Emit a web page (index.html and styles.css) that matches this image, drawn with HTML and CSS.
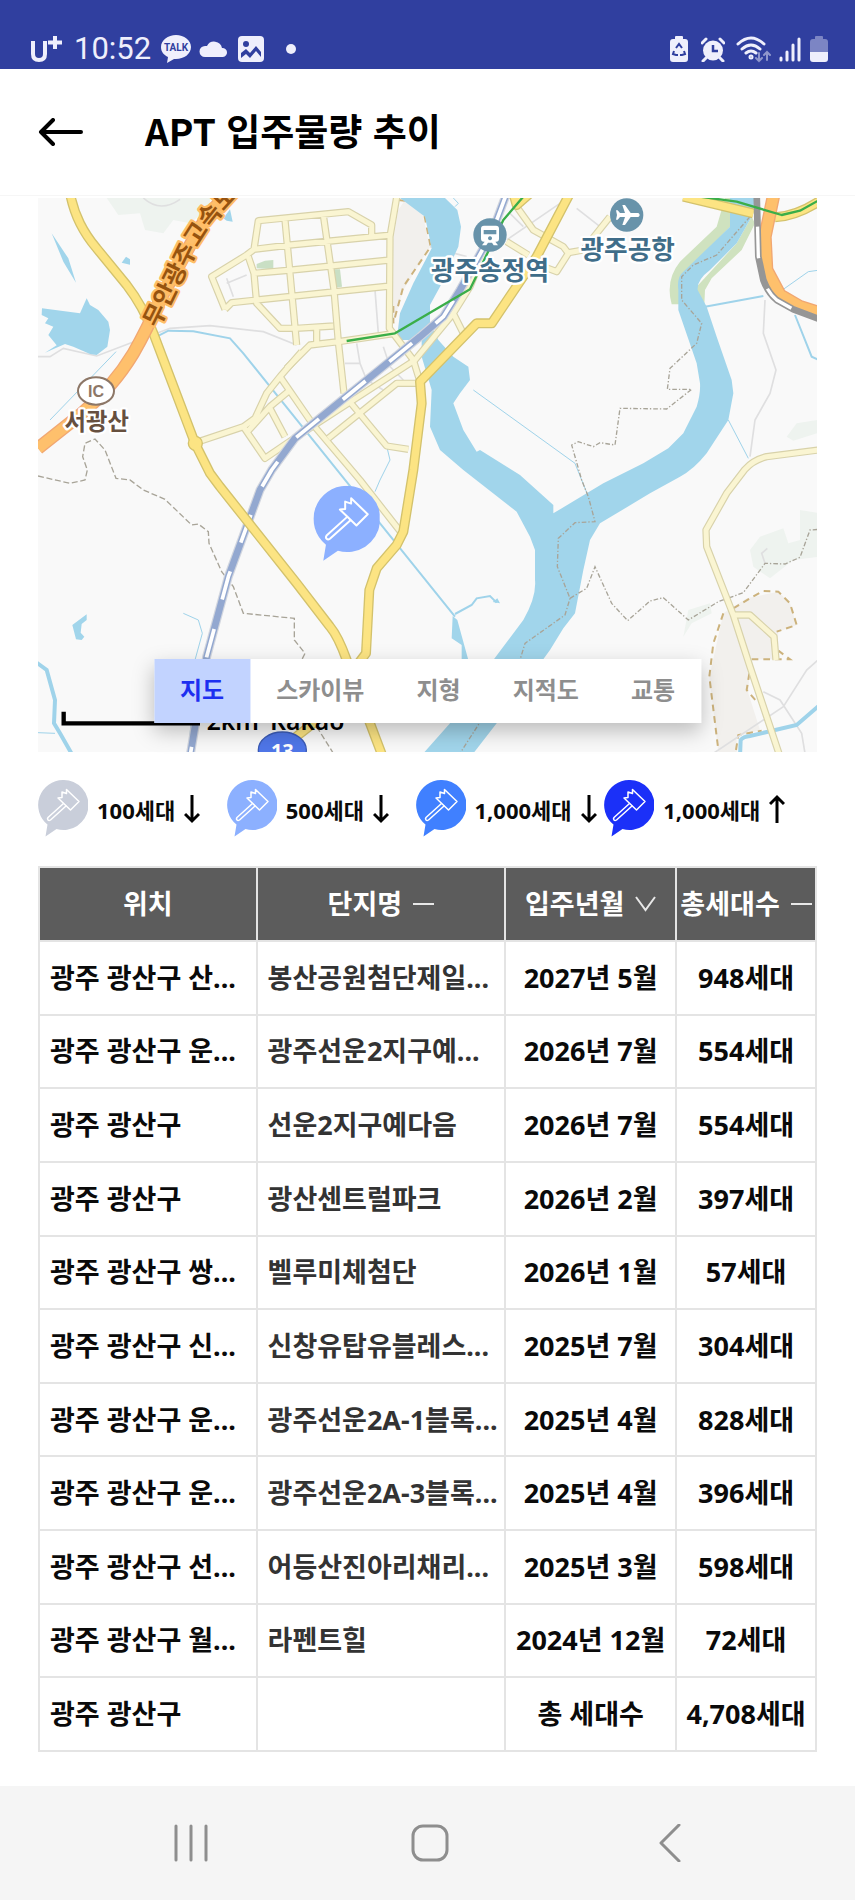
FILE: index.html
```html
<!DOCTYPE html>
<html lang="ko">
<head>
<meta charset="utf-8">
<meta name="viewport" content="width=device-width, initial-scale=1">
<title>APT 입주물량 추이</title>
<link rel="stylesheet" href="styles.css">
</head>
<body>
<svg class="defs" aria-hidden="true">
  <symbol id="pin" viewBox="0 0 100 114">
    <path fill="currentColor" d="M50 0a50 50 0 1 1-13 98L15 113l4-24A50 50 0 0 1 50 0z"/>
    <g fill="none" stroke="#fff" stroke-width="3" stroke-linejoin="round" stroke-linecap="round">
      <path d="M57 19l25 24-17 17-25-24 8-1 0-11 9 3z"/>
      <path d="M51 47L20 75q-2 3 0 5t5 0l31-28"/>
    </g>
  </symbol>
</svg>

<div class="status">
  <div class="status-group">
    <svg width="33" height="28" viewBox="0 0 33 28" fill="none" stroke="currentColor" aria-label="U+"><path d="M3 6v13q0 6 6 6t6-6V6" stroke-width="4"/><path d="M25 1v13M18 7.500h14" stroke-width="4"/></svg>
    <time class="clock">10:52</time>
    <svg class="talk" width="30" height="28" viewBox="0 0 30 28"><path fill="currentColor" d="M15 0c8 0 15 5 15 12s-7 12-15 12h-2l-7 4 1-6C3 20 0 17 0 12 0 5 7 0 15 0z"/><text x="15" y="16" text-anchor="middle" class="talk-label">TALK</text></svg>
    <svg class="cloud" width="29" height="18" viewBox="0 0 29 18"><path fill="currentColor" d="M6 17a5.500 5.500 0 0 1 0-11h2a8 8 0 0 1 15 2 4.500 4.500 0 0 1 1 9z"/></svg>
    <svg class="photo" width="26" height="26" viewBox="0 0 26 26"><rect width="26" height="26" rx="4" fill="currentColor"/><g fill="#303f9f"><circle cx="8" cy="8" r="3"/><path d="M3 17l5-4 4 4 6-7 5 6v5l-5-6-6 7-4-4-5 4z"/></g></svg>
    <span class="dot"></span>
  </div>
  <div class="status-group">
    <svg width="18" height="26" viewBox="0 0 18 26"><path fill="currentColor" d="M5 3V1q0-1 1-1h6q1 0 1 1v2h2q3 0 3 3v17q0 3-3 3H3q-3 0-3-3V6q0-3 3-3z"/><g fill="none" stroke="#303f9f" stroke-width="2"><path d="M6 12l3-4 3 4M4 15l-1 3 3 1h2M14 15l1 3-3 1h-2"/></g></svg>
    <svg class="alarm" width="24" height="25" viewBox="0 0 24 25"><circle cx="12" cy="13.500" r="10" fill="currentColor"/><path d="M1 6l4-4M23 6l-4-4M5 21l-3 3M19 21l3 3" stroke="currentColor" stroke-width="3" stroke-linecap="round"/><path d="M12 8v6h5" fill="none" stroke="#303f9f" stroke-width="2.500"/></svg>
    <svg class="wifi" width="36" height="27" viewBox="0 0 36 27" fill="none" stroke="currentColor" stroke-width="3" stroke-linecap="round"><path d="M2 8q13-12 26 0M6 13q9-8 18 0M10 17q5-4 10 0"/><circle cx="15" cy="21" r="1" /><path opacity=".5" stroke-width="2" d="M23 17v8m-3-3l3 3 3-3M31 24v-8m-3 3l3-3 3 3"/></svg>
    <svg class="signal" width="22" height="25" viewBox="0 0 22 25" stroke="currentColor" stroke-width="3" stroke-linecap="round"><path d="M2 21v2M8 15v8M14 8v15M20 2v21"/></svg>
    <svg class="battery" width="18" height="26" viewBox="0 0 18 26" fill="currentColor"><path opacity=".4" d="M5 3V1q0-1 1-1h6q1 0 1 1v2h2q3 0 3 3v10H0V6q0-3 3-3z"/><path d="M0 16h18v7q0 3-3 3H3q-3 0-3-3z"/></svg>
  </div>
</div>

<header class="topbar">
  <button class="back" type="button" aria-label="뒤로">
    <svg width="45" height="28" viewBox="0 0 45 28" fill="none" stroke="#000" stroke-width="4" stroke-linecap="round" stroke-linejoin="round"><path d="M43 14H3M15 2L3 14l12 12"/></svg>
  </button>
  <h1>APT 입주물량 추이</h1>
</header>

<main>
  <section class="map" aria-label="지도">
    <svg class="map-art" viewBox="24 24 2337 1662">
      <defs>
        <path id="highway" d="M24 775L150 675Q250 590 310 490Q350 420 395 320L500 130Q545 50 610 0"/>
        <path id="highway-label" d="M384 416L505 170Q548 92 650 -10"/>
        <path id="main-road" d="M120 10Q130 60 150 100T200 175L290 285Q340 350 370 430L495 760 540 850 570 890 800 1180 900 1310Q925 1340 950 1410L1020 1600 1058 1700"/>
        <path id="east-road" d="M1625 0L1520 200 1385 400H1340L1170 575 1175 640 1150 840 1120 1025 1100 1065 1040 1135 1018 1200 1008 1390 850 1600 760 1670"/>
        <path id="rail" d="M1430 10L1385 130 1290 300 1240 380 1170 440 795 745 725 840 690 900 595 1160 530 1400 480 1700"/>
        <path id="orange" d="M2232 10L2205 140 2210 240 2250 315 2310 350 2380 372"/>
        <path id="grey-rail" d="M2180 10L2185 200 2200 270Q2215 310 2240 330L2290 358 2380 392"/>
        <g id="streets">
          <path d="M585 358L545 260 650 195 672 178 685 92 955 65 1025 105V135M765 90L800 465M672 178L780 165 1085 135M655 200L672 250 680 340 750 415H800L910 408M672 250L785 240 1080 210M585 358L605 338 680 330 1080 288M880 75L912 300 925 455 942 610M1102 10L1080 140 1078 415 1150 510 1170 575M770 535L840 465 925 455 1095 430M860 410V460"/>
          <path d="M815 485L750 560 710 610 675 685 640 710 500 757M640 710L705 805 800 740 1155 510 1270 370 1320 290 1360 190M750 560L850 705 990 870 1115 1030M650 728L720 650 780 600M720 655L765 740M895 745L1100 580H1165M955 630L1070 768 1135 778M1270 370L1300 430"/>
          <path d="M1460 50L1510 120 1600 170 1615 190 1580 245 1540 230M1430 155L1495 195M1615 188L1660 180 1740 80"/>
          <path d="M2380 778L2210 800Q2170 810 2145 838L2090 910 2028 1020 2030 1070 2110 1275 2160 1430 2250 1700M2110 1275H2160L2232 1340 2238 1410"/>
        </g>
      </defs>

      <rect class="land" x="24" y="24" width="2337" height="1662"/>
      <path class="hill" d="M230 24L265 75 330 70 345 120 400 130 430 90 480 100 540 50V24zM2160 1080L2190 1040 2260 1015 2275 1060 2310 1050 2310 960 2370 970V1100L2290 1110 2220 1165 2170 1130zM2270 740L2300 700 2361 690V730L2290 752zM1960 1340L1975 1260 2040 1240 2045 1270 1985 1300z"/>
      <path class="bank" d="M2085 24L2060 110 1950 215Q1905 270 1925 343H1950L1955 260 2100 110V24zM2165 80L2175 100 2135 180 2045 265 2025 300 2023 345H2000V290L2120 160z"/>
      <path class="park" d="M680 235V222L705 212 730 210V238zM908 238H930L936 290 912 293z"/>
      <path class="zone" d="M1105 60L1125 30 1170 40 1200 170 1120 300 1090 400 1090 150z"/>
      <path class="zone" d="M2080 1270L2150 1225 2245 1205 2280 1240 2300 1305 2245 1325 2240 1408 2160 1408 2155 1510 2190 1620 2120 1640V1686H2065L2038 1460z"/>
      <path class="zone-edge" d="M1105 30L1165 38 1182 70 1202 170 1120 290 1090 400V340M2080 1270L2050 1360 2038 1460 2065 1680M2110 1255L2160 1225 2200 1203 2245 1205 2280 1240 2300 1305 2240 1325M2165 1408H2280L2245 1382M2158 1450L2150 1500 2180 1535M2118 1680L2125 1635 2195 1622"/>

      <g class="lane">
        <path d="M24 500H60L100 475 200 498 300 460 420 415 540 407 700 425 800 465"/>
        <path d="M1035 300L1045 430M945 520H990L1010 570 1060 600M980 460L990 520M1060 470L1080 530 1120 570M590 265L610 320M590 280L650 255"/>
        <path d="M1440 70L1480 110M1430 150L1590 40M1640 55L1710 110M1200 170L1310 200M340 24Q390 70 450 28"/>
        <path d="M2205 330L2200 430 2238 540 2220 610 2175 690 2160 800M2050 1690L2260 1550 2330 1440 2370 1405M2200 1505L2250 1530 2315 1630 2325 1690M2205 1120L2195 1090 2212 1075"/>
      </g>

      <g class="stream">
        <path d="M380 440L415 422 490 424 600 445 640 490 1275 1280"/>
        <path class="thin" d="M258 485L60 690M460 1270L505 1290 517 1330 495 1410 480 1640M24 1628L75 1630M1070 768L1080 810 1050 870 1035 905M1330 600L1635 820 1675 920M2095 690L2155 805M2250 305L2335 245 2370 240M2280 24V10M1270 24L1285 40 1275 50"/>
        <path d="M2025 350L2200 318M2295 375L2345 500 2370 512M1275 1272L1325 1245 1340 1225 1380 1218 1400 1238"/>
        <path class="wide" d="M20 1418L50 1440 75 1530 72 1600 90 1630 130 1700M2130 1700L2132 1650Q2140 1640 2160 1638L2300 1605 2375 1540"/>
      </g>
      <path class="water" d="M36 355L150 370 170 325 180 345 205 360 235 395 240 420 232 470 200 495 180 492 130 470 105 462 45 488 80 466 55 435 70 410 45 400 55 385 35 375zM65 130L115 205 138 278 100 215zM275 218L288 200 300 208V224zM580 85L600 58 608 95 590 92zM170 1273V1290L155 1302 152 1328 163 1340 155 1350 138 1348 127 1305zM1268 1278L1282 1290 1315 1410H1295V1365L1265 1345zM1388 1236L1402 1225 1410 1240z"/>
      <path class="water" d="M1110 24H1245L1282 60 1293 110 1285 170 1230 290 1200 345V400L1225 450 1270 500 1315 530 1320 570 1290 610 1270 640 1300 720 1340 785 1350 780 1470 855 1570 945V970L1720 880 1840 820 1915 775 1960 730 2000 650Q2012 610 2010 580L2000 520 1945 360V300Q1940 260 1960 245L2100 110V24H2175L2165 80 2120 160 2040 240Q2000 270 2003 300L2030 350 2060 440 2105 570 2110 610 2095 690 2030 790Q1990 840 1950 860L1860 910 1710 1000 1680 1050 1660 1140 1635 1270 1600 1315 1560 1380 1400 1600 1330 1690H1180L1260 1600 1390 1410 1480 1290Q1520 1220 1515 1170V1080L1500 1040 1460 965 1300 840 1230 780 1200 710 1205 600 1175 500V450H1100L1110 370 1150 280 1205 175 1185 80z"/>

      <g class="border">
        <path d="M24 858L120 880 165 870 172 840 158 800 165 760 195 747 225 780 258 865 300 870 340 900 405 928 485 1005 505 1002 535 1025 537 1060 575 1145 610 1190 640 1270 793 1285V1350L825 1390 815 1410M860 1610L910 1690"/>
        <path class="fine" d="M2160 80L2060 195 1990 225 1955 260V330L2015 400 2000 460 1920 535 1912 598H1985L1910 657 1770 655 1755 765 1710 758 1690 770 1645 755 1625 765 1655 870 1675 920 1695 995 1635 998 1585 1045 1582 1130 1620 1225 1605 1275 1485 1360 1470 1410 1290 1690M1620 1225L1670 1195 1695 1130 1745 1240 1793 1292 1860 1233 1900 1223 1975 1290 2065 1235 2140 1208 2205 1120 2265 1122 2310 1102 2340 1020 2370 1018"/>
      </g>

      <use href="#streets" class="street-case"/>
      <use href="#streets" class="street"/>
      <use href="#rail" class="rail-case"/>
      <use href="#rail" class="rail"/>
      <use href="#rail" class="rail-dash"/>
      <g class="road-case"><use href="#main-road"/><use href="#east-road"/><circle cx="496" cy="760" r="8"/><path d="M1450 10L1460 45 1500 10M1960 20L2170 70M2235 82Q2300 78 2370 32"/></g>
      <g class="road"><use href="#main-road"/><use href="#east-road"/><circle cx="496" cy="760" r="8"/><path d="M1450 10L1460 45 1500 10M1960 20L2170 70M2235 82Q2300 78 2370 32"/></g>
      <g class="highway-case"><use href="#highway"/><use href="#orange"/></g>
      <g class="highway"><use href="#highway"/><use href="#orange"/></g>
      <use href="#grey-rail" class="grey-rail"/>
      <use href="#grey-rail" class="grey-rail-dash"/>
      <path class="subway" d="M950 453L1095 430 1320 298 1360 215 1420 90 1480 20M2010 20L2120 35 2255 75 2310 62 2375 26"/>

      <text class="road-name"><textPath href="#highway-label">무안광주고속도</textPath></text>
      <ellipse class="ic" cx="198" cy="603" rx="54" ry="41"/>
      <text class="ic-label" x="198" y="621">IC</text>
      <text class="place" x="200" y="720">서광산</text>

      <circle class="poi" cx="1380" cy="135" r="50"/>
      <path fill="#fff" fill-rule="evenodd" d="M1362 107h36q9 0 9 9v30q0 9-9 9h-2l8 11h-13l-5-8h-12l-5 8h-13l8-11h-2q-9 0-9-9v-30q0-9 9-9zM1361 120v13h38v-13zM1380 139a6 6 0 1 0 .1 0z"/>
      <text class="poi-label" x="1380" y="270">광주송정역</text>
      <circle class="poi" cx="1790" cy="75" r="50"/>
      <path fill="#fff" d="M1825 69q8 6 0 12h-23l-17 24h-8l8-24h-15l-7 8h-5l3-14-3-14h5l7 8h15l-8-24h8l17 24z"/>
      <text class="poi-label" x="1793" y="208">광주공항</text>

      <ellipse class="route" cx="757" cy="1680" rx="72" ry="54"/>
      <text class="route-label" x="757" y="1705">13</text>
      <path class="scale" d="M101 1565V1600H510"/>
      <text class="scale-label" x="530" y="1620">2km</text>
      <text class="scale-label" x="720" y="1620">Kakao</text>
      <use href="#pin" class="pin-500" x="850" y="887" width="199" height="227"/>
    </svg>
    <nav class="map-types" aria-label="지도 유형">
      <button type="button" class="active" aria-pressed="true">지도</button>
      <button type="button">스카이뷰</button>
      <button type="button">지형</button>
      <button type="button">지적도</button>
      <button type="button">교통</button>
    </nav>
  </section>

  <ul class="legend">
    <li><svg class="pin pin-100"><use href="#pin"/></svg><span>100세대</span><svg class="arrow" viewBox="0 0 16 30"><path d="M8 1v26M1 20l7 7 7-7"/></svg></li>
    <li><svg class="pin pin-500"><use href="#pin"/></svg><span>500세대</span><svg class="arrow" viewBox="0 0 16 30"><path d="M8 1v26M1 20l7 7 7-7"/></svg></li>
    <li><svg class="pin pin-1000"><use href="#pin"/></svg><span>1,000세대</span><svg class="arrow" viewBox="0 0 16 30"><path d="M8 1v26M1 20l7 7 7-7"/></svg></li>
    <li><svg class="pin pin-over"><use href="#pin"/></svg><span>1,000세대</span><svg class="arrow" viewBox="0 0 16 30"><path d="M8 29V3M1 10l7-7 7 7"/></svg></li>
  </ul>

  <table>
    <colgroup><col class="c-place"><col class="c-name"><col class="c-date"><col class="c-count"></colgroup>
    <thead>
      <tr>
        <th>위치</th>
        <th><button type="button">단지명<svg width="21" height="16" viewBox="0 0 21 16"><path d="M0 8h21"/></svg></button></th>
        <th><button type="button">입주년월<svg width="21" height="16" viewBox="0 0 21 16"><path d="M1 1l9.500 13L20 1"/></svg></button></th>
        <th><button type="button">총세대수<svg width="21" height="16" viewBox="0 0 21 16"><path d="M0 8h21"/></svg></button></th>
      </tr>
    </thead>
    <tbody>
      <tr><td>광주 광산구 산...</td><td>봉산공원첨단제일...</td><td>2027년 5월</td><td>948세대</td></tr>
      <tr><td>광주 광산구 운...</td><td>광주선운2지구예...</td><td>2026년 7월</td><td>554세대</td></tr>
      <tr><td>광주 광산구</td><td>선운2지구예다음</td><td>2026년 7월</td><td>554세대</td></tr>
      <tr><td>광주 광산구</td><td>광산센트럴파크</td><td>2026년 2월</td><td>397세대</td></tr>
      <tr><td>광주 광산구 쌍...</td><td>벨루미체첨단</td><td>2026년 1월</td><td>57세대</td></tr>
      <tr><td>광주 광산구 신...</td><td>신창유탑유블레스...</td><td>2025년 7월</td><td>304세대</td></tr>
      <tr><td>광주 광산구 운...</td><td>광주선운2A-1블록...</td><td>2025년 4월</td><td>828세대</td></tr>
      <tr><td>광주 광산구 운...</td><td>광주선운2A-3블록...</td><td>2025년 4월</td><td>396세대</td></tr>
      <tr><td>광주 광산구 선...</td><td>어등산진아리채리...</td><td>2025년 3월</td><td>598세대</td></tr>
      <tr><td>광주 광산구 월...</td><td>라펜트힐</td><td>2024년 12월</td><td>72세대</td></tr>
      <tr><td>광주 광산구</td><td></td><td>총 세대수</td><td>4,708세대</td></tr>
    </tbody>
  </table>
</main>

<nav class="sysnav" aria-label="시스템">
  <button type="button" aria-label="최근 앱"><svg width="38" height="38" viewBox="0 0 38 38"><path d="M4 2v34M19 2v34M34 2v34"/></svg></button>
  <button type="button" aria-label="홈"><svg width="38" height="38" viewBox="0 0 38 38"><rect x="2" y="2" width="34" height="34" rx="10"/></svg></button>
  <button type="button" aria-label="뒤로"><svg width="38" height="38" viewBox="0 0 38 38"><path d="M28 1L10 19l18 18"/></svg></button>
</nav>
</body>
</html>
```
FILE: styles.css
```css
* { box-sizing: border-box; }

body {
  margin: 0;
  min-height: 100vh;
  display: flex;
  flex-direction: column;
  background: #fff;
  color: #0a0a0a;
  font-family: "Noto Sans", "Noto Sans CJK KR", sans-serif;
}

button {
  margin: 0;
  padding: 0;
  border: 0;
  background: none;
  color: inherit;
  font: inherit;
}

svg { display: block; }
.defs { position: absolute; width: 0; height: 0; }

/* status bar */
.status {
  display: flex;
  justify-content: space-between;
  height: 69px;
  padding: 29px 27px 0 30px;
  background: #303f9f;
  color: #efeffc;
}
.status-group { display: flex; align-items: center; height: 40px; }
.clock { margin-left: 11px; font: 31px/40px Roboto, sans-serif; }
.talk { margin-left: 10px; }
.talk-label { fill: #303f9f; font: 700 10px Roboto, sans-serif; }
.cloud { margin-left: 8px; }
.photo { margin-left: 10px; }
.dot { width: 10px; height: 10px; margin-left: 22px; border-radius: 50%; background: currentColor; }
.alarm { margin-left: 13px; }
.wifi { margin-left: 11px; }
.signal { margin-left: 7px; }
.battery { margin-left: 9px; }

/* title bar */
.topbar {
  display: flex;
  align-items: center;
  height: 127px;
  padding: 0 38px;
  gap: 62px;
  border-bottom: 1px solid #f6f6f6;
}
h1 {
  margin: 0;
  padding-bottom: 4px;
  font: 700 37px/48px "Noto Sans CJK KR", sans-serif;
  color: #000;
}

main { padding: 2px 38px 34px; }

/* map */
.map { position: relative; }
.map-art { width: 100%; height: auto; overflow: hidden; }
.map-art text { font-family: "Noto Sans CJK KR", sans-serif; text-anchor: middle; }
.land { fill: #f9f9f9; }
.hill { fill: #eef3ef; }
.bank { fill: #cfe2bf; }
.park { fill: #c9dfc4; }
.zone { fill: #f2f0ed; }
.zone-edge { fill: none; stroke: #ccb27c; stroke-width: 6; stroke-dasharray: 20 15; }
.lane { fill: none; stroke: #dfdfe0; stroke-width: 5; }
.stream { fill: none; stroke: #9fd3ea; stroke-width: 6; }
.thin { stroke-width: 3; }
.wide { stroke-width: 12; }
.water { fill: #a1d5eb; }
.border { fill: none; stroke: #a8a498; stroke-width: 4; stroke-dasharray: 18 8; }
.fine { stroke-dasharray: 14 6 4 6; }
.street-case, .street, .rail-case, .rail, .rail-dash, .road-case, .road,
.highway-case, .highway, .grey-rail, .grey-rail-dash, .subway { fill: none; stroke-linejoin: round; }
.street-case { stroke: #d8d2aa; stroke-width: 22; }
.street { stroke: #faf5d2; stroke-width: 15; }
.rail-case { stroke: #d2d6df; stroke-width: 27; }
.rail { stroke: #93a8d0; stroke-width: 20; }
.rail-dash { stroke: #fff; stroke-width: 11; stroke-dasharray: 88 92; }
.road-case { stroke: #d3c26c; stroke-width: 30; }
.road { stroke: #fce483; stroke-width: 22; }
.highway-case { stroke: #f1a772; stroke-width: 40; }
.highway { stroke: #fec06c; stroke-width: 32; }
.grey-rail { stroke: #969696; stroke-width: 20; }
.grey-rail-dash { stroke: #fff; stroke-width: 10; stroke-dasharray: 95 95; stroke-dashoffset: 90; }
.subway { stroke: #3aae49; stroke-width: 7; }
.map-art .road-name { text-anchor: start; font-size: 73px; font-weight: 700; fill: #96530f; stroke: #ffbd66; stroke-width: 14; paint-order: stroke; stroke-linejoin: round; }
.ic { fill: #fff; stroke: #8d7767; stroke-width: 6; }
.map-art .ic-label { font: 700 48px "Liberation Sans", sans-serif; fill: #8d7767; }
.place { font-size: 70px; font-weight: 700; fill: #67503f; stroke: #fff; stroke-width: 14; paint-order: stroke; stroke-linejoin: round; }
.poi { fill: #6893aa; }
.poi-label { font-size: 77px; font-weight: 700; fill: #3f6d89; stroke: #fff; stroke-width: 14; paint-order: stroke; stroke-linejoin: round; }
.route { fill: #4f76e8; stroke: #3b5bb5; stroke-width: 4; }
.map-art .route-label { font: 700 60px "Noto Sans", sans-serif; fill: #fff; }
.scale { fill: none; stroke: #000; stroke-width: 13; }
.map-art .scale-label { font: 600 74px "Noto Sans", sans-serif; text-anchor: start; fill: #000; }

.map-types {
  position: absolute;
  left: 50%;
  bottom: 29px;
  display: flex;
  transform: translateX(-50%);
  background: #fff;
  box-shadow: 0 8px 20px rgba(0, 0, 0, .25);
}
.map-types button {
  height: 64px;
  padding: 0 26px 5px;
  color: #8e8e8e;
  font-size: 24px;
  font-weight: 700;
  white-space: nowrap;
}
.map-types .active { background: #c2d3ff; color: #1d2ff0; }

/* legend */
.legend {
  display: grid;
  grid-template-columns: repeat(4, 1fr);
  margin: 28px 0 29px;
  padding: 0 24px 0 0;
  list-style: none;
}
.legend li {
  display: flex;
  align-items: center;
  gap: 9px;
  font-size: 22px;
  font-weight: 700;
  line-height: 32px;
  white-space: nowrap;
}
.pin { flex: none; width: 50px; height: 57px; }
.legend span { padding-top: 3px; }
.arrow { flex: none; width: 16px; height: 30px; fill: none; stroke: #000; stroke-width: 3; }
.pin-100 { color: #c9ceda; }
.pin-500 { color: #8cb0ff; }
.pin-1000 { color: #4080ff; }
.pin-over { color: #1b30f8; }

/* table */
table {
  width: 100%;
  height: 886px;
  table-layout: fixed;
  border-collapse: collapse;
  font-size: 27px;
  line-height: 40px;
}
.c-place { width: 28%; }
.c-name { width: 32%; }
.c-date { width: 22%; }
.c-count { width: 18%; }
thead tr { height: 74px; }
th, td {
  padding: 0;
  border: 2px solid #e4e4e4;
  font-weight: 700;
  text-align: center;
  white-space: nowrap;
  overflow: hidden;
}
th { background: #5c5c5c; color: #fff; }
th button { display: inline-flex; align-items: center; gap: 11px; }
th svg { fill: none; stroke: #e8e8e8; stroke-width: 2; }
td:nth-child(-n+2) { padding-left: 10px; text-align: left; }
td:nth-child(2) { color: #333; }

/* system navigation */
.sysnav {
  display: grid;
  grid-template-columns: repeat(3, 1fr);
  height: 114px;
  margin-top: auto;
  padding: 0 65px 0 71px;
  background: #f5f5f5;
}
.sysnav button { display: flex; align-items: center; justify-content: center; }
.sysnav svg { fill: none; stroke: #8e8e8e; stroke-width: 3; stroke-linecap: round; stroke-linejoin: round; }
```
